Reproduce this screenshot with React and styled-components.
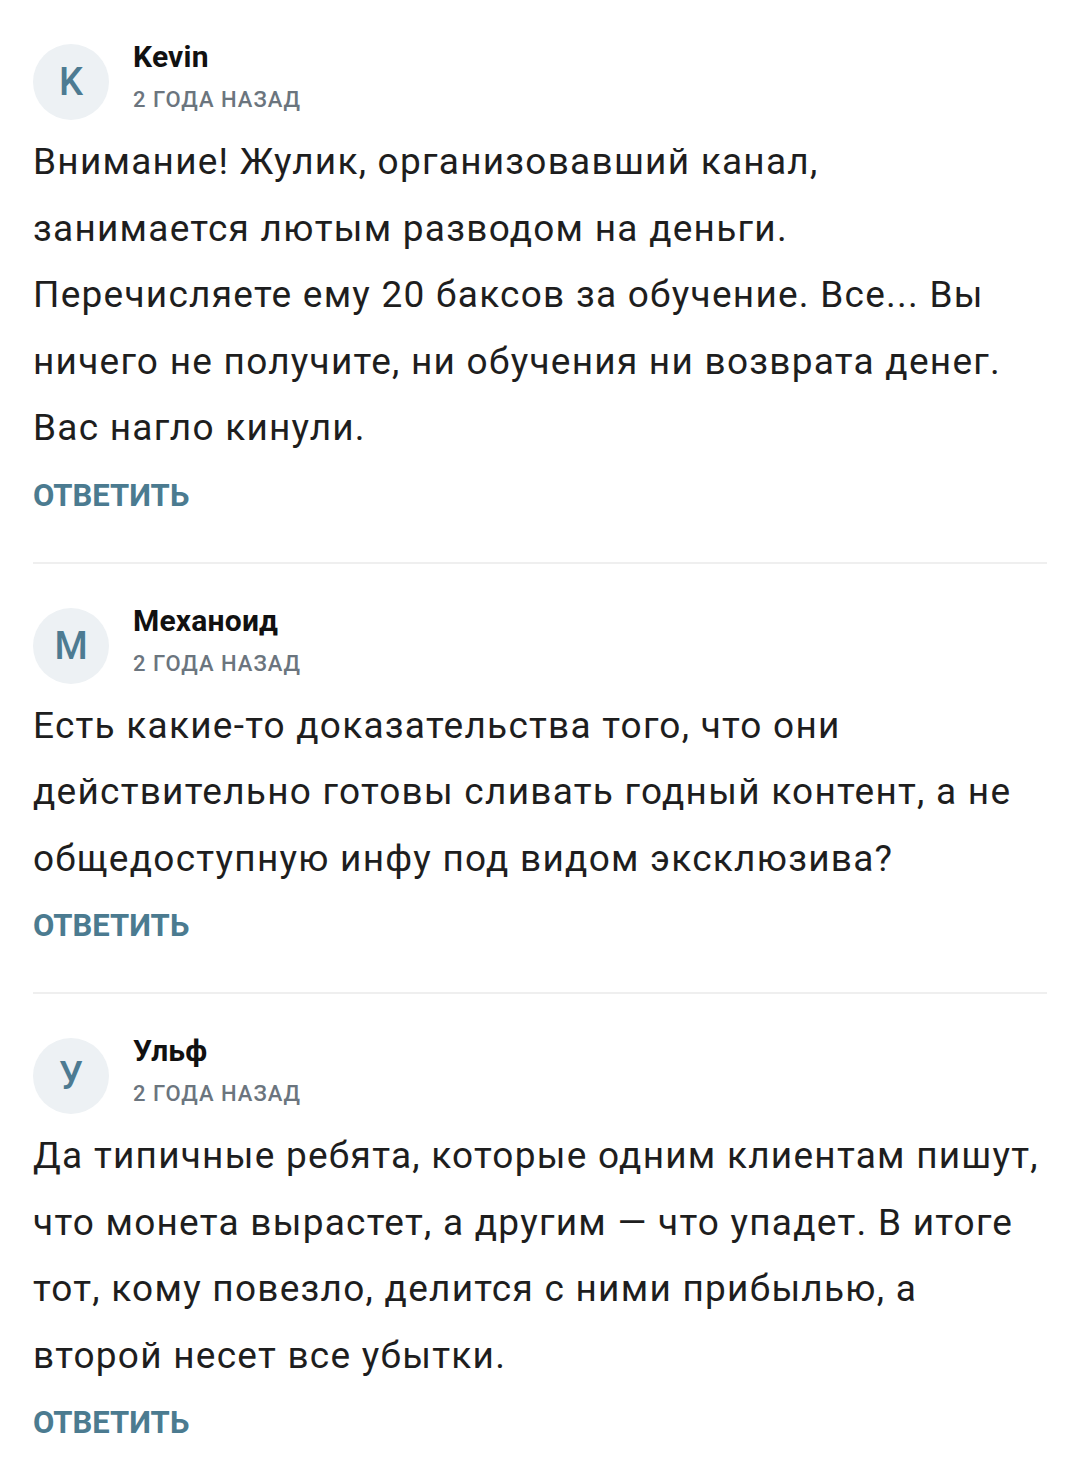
import React from "react";
import styled, { createGlobalStyle } from "styled-components";

const GlobalStyle = createGlobalStyle`
  html, body {
    margin: 0;
    padding: 0;
    background: #ffffff;
  }
  body {
    font-family: Roboto, "Noto Sans", "Liberation Sans", sans-serif;
    -webkit-font-smoothing: antialiased;
  }
`;

const comments = [
  {
    letter: "K",
    name: "Kevin",
    date: "2 года назад",
    lines: [
      "Внимание! Жулик, организовавший канал,",
      "занимается лютым разводом на деньги.",
      "Перечисляете ему 20 баксов за обучение. Все... Вы",
      "ничего не получите, ни обучения ни возврата денег.",
      "Вас нагло кинули.",
    ],
  },
  {
    letter: "М",
    name: "Механоид",
    date: "2 года назад",
    lines: [
      "Есть какие-то доказательства того, что они",
      "действительно готовы сливать годный контент, а не",
      "общедоступную инфу под видом эксклюзива?",
    ],
  },
  {
    letter: "У",
    name: "Ульф",
    date: "2 года назад",
    lines: [
      "Да типичные ребята, которые одним клиентам пишут,",
      "что монета вырастет, а другим — что упадет. В итоге",
      "тот, кому повезло, делится с ними прибылью, а",
      "второй несет все убытки.",
    ],
  },
];

function Comment({ item }) {
  return (
    <CommentWrap>
      <Header>
        <Avatar>{item.letter}</Avatar>
        <Meta>
          <Name>{item.name}</Name>
          <Date>{item.date}</Date>
        </Meta>
      </Header>
      <Body>
        {item.lines.map((line, i) => (
          <React.Fragment key={i}>
            {line}
            {i < item.lines.length - 1 && <br />}
          </React.Fragment>
        ))}
      </Body>
      <Reply>Ответить</Reply>
    </CommentWrap>
  );
}

export default function App() {
  return (
    <>
      <GlobalStyle />
      <Page>
        {comments.map((c, i) => (
          <React.Fragment key={i}>
            {i > 0 && <Divider />}
            <Comment item={c} />
          </React.Fragment>
        ))}
      </Page>
    </>
  );
}

const Page = styled.main`
  width: 1080px;
  box-sizing: border-box;
  padding: 44px 33px 0 33px;
`;

const CommentWrap = styled.section`
  display: flex;
  flex-direction: column;
  padding-bottom: 49px;
`;

const Header = styled.div`
  display: flex;
  align-items: flex-start;
  gap: 24px;
  height: 76px;
`;

const Avatar = styled.div`
  width: 76px;
  height: 76px;
  border-radius: 50%;
  background: #edf1f4;
  color: #4d7b92;
  display: flex;
  align-items: center;
  justify-content: center;
  font-size: 38px;
  font-weight: 500;
  flex-shrink: 0;
`;

const Meta = styled.div`
  display: flex;
  flex-direction: column;
  gap: 14px;
  margin-top: -3px;
`;

const Name = styled.div`
  font-size: 30px;
  line-height: 32px;
  font-weight: 700;
  color: #111111;
  letter-spacing: 0.2px;
`;

const Date = styled.div`
  font-size: 22px;
  line-height: 26px;
  font-weight: 500;
  color: #6b757e;
  letter-spacing: 1px;
  text-transform: uppercase;
`;

const Body = styled.p`
  margin: 9px 0 0 0;
  font-size: 37px;
  line-height: 66.5px;
  letter-spacing: 1.25px;
  color: #1e1e1e;
  white-space: nowrap;
`;

const Reply = styled.div`
  margin-top: 17px;
  font-size: 31px;
  line-height: 34px;
  font-weight: 700;
  color: #4b7b90;
  text-transform: uppercase;
  align-self: flex-start;
`;

const Divider = styled.hr`
  border: 0;
  height: 2px;
  background: #efefef;
  margin: 0 0 44px 0;
`;
